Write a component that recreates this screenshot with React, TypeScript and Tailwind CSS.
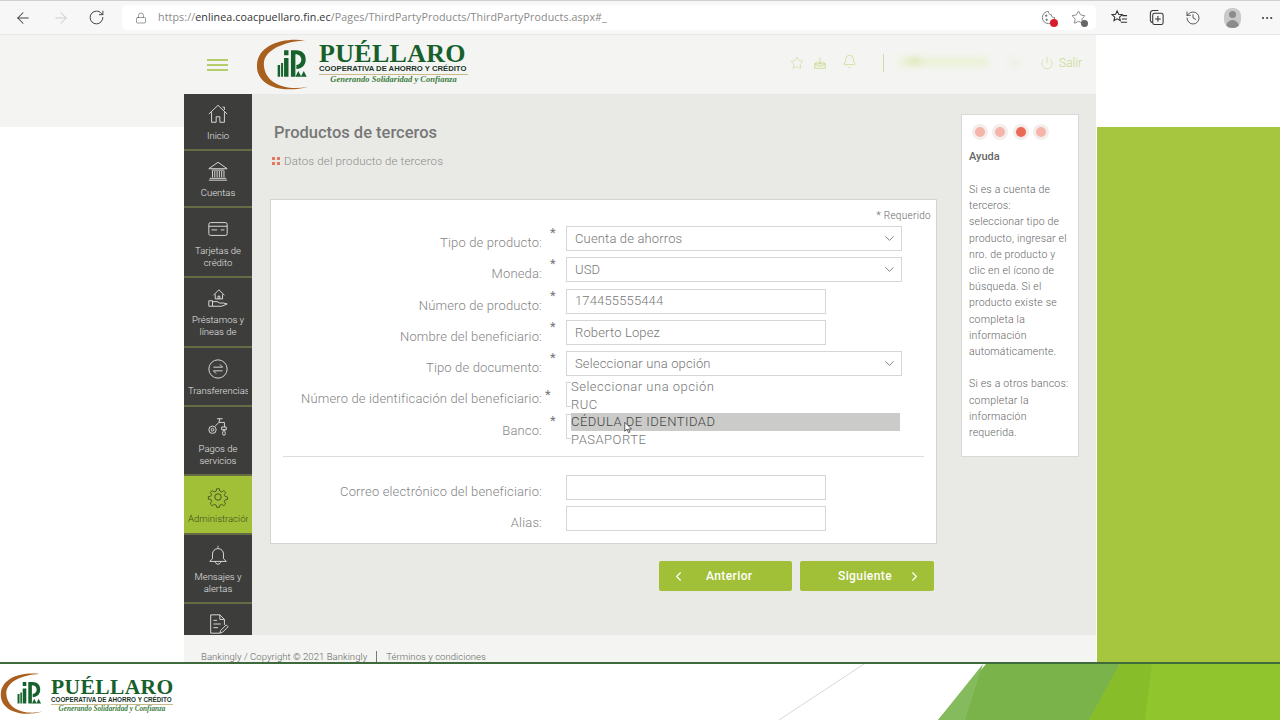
import { ArrowLeft, ArrowRight, ChevronDown, ChevronLeft, ChevronRight, History, Lock, MoreHorizontal, Power, RotateCw, Star, Bell } from "lucide-react";

function Logo({ small }: { small?: boolean }) {
  return (
    <div className={small ? "flex items-start w-[173px] h-[52px]" : "flex items-start w-[212px] h-[54px]"}>
      <svg viewBox="0 0 64 54" className={small ? "w-[51px] h-[52px] shrink-0" : "w-[63px] h-[54px] shrink-0"}>
        <path d="M50 2C26-1 2 7 1 27c-1 20 24 30 52 22-22 5-44-3-45-22C7 12 28 3 50 2Z" fill="#a9601f" />
        <path d="M28.500 12h4.500v5h-4.500zM28.500 20h4.500v19h-4.500zM25.500 25h2v14h-2zM22 27h2.500v12H22z" fill="#17622c" />
        <path d="M35.500 12h5c7 0 10 4 10 9.500S47 31 41 31v-4c3 0 5-2.500 5-5.500S44 16 40 16v23h-4.500Z" fill="#17622c" />
        <path d="M43 33l3 6h-6ZM48.500 33l3 6h-6Z" fill="#17622c" />
      </svg>
      <div className={small ? "flex flex-col w-[122px]" : "flex flex-col w-[149px]"}>
        <div className={small ? "text-[21.500px] leading-[17px] mt-[11px] font-bold text-[#17602c] tracking-[0.4px] whitespace-nowrap font-['Liberation_Serif',serif]" : "text-[26px] leading-[20px] mt-[6px] font-bold text-[#17602c] tracking-[0.3px] whitespace-nowrap font-['Liberation_Serif',serif]"}>
          PUÉLLARO
        </div>
        <div className={small ? "text-[6.300px] leading-[8px] font-bold text-[#20352a] whitespace-nowrap border-b border-[#c9b98a] font-['Liberation_Sans',sans-serif]" : "text-[7.700px] leading-[10px] font-bold text-[#20352a] whitespace-nowrap border-b border-[#c9b98a] font-['Liberation_Sans',sans-serif]"}>
          COOPERATIVA DE AHORRO Y CRÉDITO
        </div>
        <div className={small ? "text-[7.200px] leading-[9px] font-bold italic text-[#3e7d43] text-center whitespace-nowrap font-['Liberation_Serif',serif]" : "text-[8.500px] leading-[8px] font-bold italic text-[#3e7d43] text-center whitespace-nowrap font-['Liberation_Serif',serif]"}>
          Generando Solidaridad y Confianza
        </div>
      </div>
    </div>
  );
}

function BrowserBar() {
  return (
    <div className="h-[35px] shrink-0 flex items-center bg-[#f7f7f7] border-t border-t-[#cfcfcf] border-b border-b-[#e8e8e8] text-[#444] font-['Open_Sans',sans-serif]">
      <div className="w-[122px] shrink-0 flex items-center pl-[14px]">
        <ArrowLeft size={18} strokeWidth={1.4} />
        <ArrowRight size={18} strokeWidth={1.4} className="ml-[20px] text-[#cfcfcf]" />
        <RotateCw size={17} strokeWidth={1.4} className="ml-[18px]" />
      </div>
      <div className="w-[974px] h-[25px] shrink-0 bg-white rounded-[5px] flex items-center pl-[13px]">
        <Lock size={12} strokeWidth={1.3} className="text-[#666]" />
        <div className="ml-[11px] text-[10.700px] tracking-[0.1px] text-[#8a8a8a] whitespace-nowrap">
          https://<span className="text-[#333]">enlinea.coacpuellaro.fin.ec</span>/Pages/ThirdPartyProducts/ThirdPartyProducts.aspx#_
        </div>
        <div className="ml-auto flex items-center pr-[9px] gap-[15px]">
          <div className="relative w-[15px] h-[15px]">
            <svg viewBox="0 0 16 16" className="w-[15px] h-[15px]" fill="none" stroke="#777" strokeWidth="1">
              <path d="M8 1.500A6.500 6.500 0 1 0 14.500 8 3 3 0 0 1 11 5 3 3 0 0 1 8 1.500Z" />
              <circle cx="5.500" cy="6" r=".8" fill="#777" />
              <circle cx="6" cy="10.500" r=".8" fill="#777" />
            </svg>
            <span className="absolute right-[-2px] bottom-[-2px] w-[8px] h-[8px] rounded-full bg-[#d81e2c]" />
          </div>
          <div className="relative w-[16px] h-[16px]">
            <Star size={15} strokeWidth={1.1} className="text-[#555]" />
            <span className="absolute right-[-1px] bottom-[-1px] w-[7px] h-[7px] rounded-full bg-[#666]" />
          </div>
        </div>
      </div>
      <div className="flex items-center pl-[15px] text-[#333]">
        <svg viewBox="0 0 18 18" className="w-[17px] h-[17px]" fill="none" stroke="currentColor" strokeWidth="1.100">
          <path d="M6.500 2l1.600 3.600 3.900.4-3 2.600.9 3.900L6.500 10.500 3.100 12.500 4 8.600 1 6l3.900-.4ZM12 7h5M11.500 10.500h5.500M10.500 14h6.500" />
        </svg>
        <svg viewBox="0 0 18 18" className="ml-[20px] w-[17px] h-[17px]" fill="none" stroke="currentColor" strokeWidth="1.100">
          <rect x="5" y="4.500" width="11" height="12" rx="2" />
          <path d="M5 14.500A3 3 0 0 1 2.500 12V4A3 3 0 0 1 5.500 1.500H11M10.500 7.500v6M7.500 10.500h6" />
        </svg>
        <History size={16} strokeWidth={1.2} className="ml-[20px]" />
        <div className="ml-[23px] w-[17px] h-[20px] rounded-[8px] bg-[#c9c9c9] relative overflow-hidden">
          <span className="absolute left-[5px] top-[3px] w-[7px] h-[7px] rounded-full bg-[#8c8c8c]" />
          <span className="absolute left-[2px] top-[12px] w-[13px] h-[8px] rounded-t-full bg-[#8c8c8c]" />
        </div>
        <MoreHorizontal size={14} strokeWidth={1.6} className="ml-[19px]" />
      </div>
    </div>
  );
}

function TopHeader() {
  return (
    <div className="h-[59px] shrink-0 flex items-center bg-[#f4f5f2] pl-[23px] pr-[14px]">
      <div className="w-[21px] flex flex-col gap-[3px]">
        <span className="h-[2px] bg-[#b4cc6a]" />
        <span className="h-[2px] bg-[#b4cc6a]" />
        <span className="h-[2px] bg-[#b4cc6a]" />
      </div>
      <div className="ml-[28px] mt-[1px]">
        <Logo />
      </div>
      <div className="ml-auto flex items-center mb-[3px] text-[#c6d88f]">
        <Star size={14} strokeWidth={1.1} />
        <svg viewBox="0 0 16 16" className="ml-[9px] w-[14px] h-[14px]" fill="none" stroke="currentColor" strokeWidth="1">
          <path d="M2 9l3-3M14 9l-3-3M2 9v5h12V9H2l4 2.500h4L14 9M8 2v7M6 7l2 2 2-2" />
        </svg>
        <Bell size={15} strokeWidth={1.1} className="ml-[15px] mb-[3px]" />
        <span className="ml-[26px] w-[1px] h-[18px] bg-[#cfdc9f]" />
        <div className="ml-[11px] w-[135px] h-[14px] relative blur-[3px]">
          <span className="absolute left-[4px] top-[2px] w-[90px] h-[8px] bg-[#eaf0d3]" />
          <span className="absolute left-[14px] top-[1px] w-[12px] h-[8px] bg-[#dfe8bd]" />
          <span className="absolute left-[115px] top-[2px] w-[10px] h-[9px] bg-[#eef0e4]" />
        </div>
        <Power size={14} strokeWidth={1.1} className="ml-[10px]" />
        <span className="ml-[5px] text-[12px] font-light font-['Roboto',sans-serif]">Salir</span>
      </div>
    </div>
  );
}

const stroke = { fill: "none", stroke: "currentColor", strokeWidth: 1 };

const navItems = [
  {
    lines: ["Inicio"],
    h: "h-[57px] pt-[9px]",
    icon: (
      <svg viewBox="0 0 24 24" className="w-[22px] h-[22px]" {...stroke}>
        <path d="M2 12L12 2.500 22 12M5 10v11h5v-6h4v6h5V10M17 4.500h2v3" />
      </svg>
    ),
  },
  {
    lines: ["Cuentas"],
    h: "h-[57px] pt-[9px]",
    icon: (
      <svg viewBox="0 0 24 24" className="w-[22px] h-[22px]" {...stroke}>
        <path d="M2 9.500L12 2.500l10 7ZM5 11h14M6 12v7M8.500 12v7M11 12v7M13.500 12v7M16 12v7M18.500 12v7M3 20h18M2 22h20" />
      </svg>
    ),
  },
  {
    lines: ["Tarjetas de", "crédito"],
    h: "h-[70px] pt-[10px]",
    icon: (
      <svg viewBox="0 0 24 24" className="w-[22px] h-[22px]" {...stroke}>
        <rect x="2" y="5" width="20" height="14" rx="2" />
        <path d="M2 9h20M5 13h6M15 13h4" />
      </svg>
    ),
  },
  {
    lines: ["Préstamos y", "líneas de"],
    h: "h-[70px] pt-[9px]",
    icon: (
      <svg viewBox="0 0 24 24" className="w-[22px] h-[22px]" {...stroke}>
        <path d="M7 9l6-6 6 6M9 8v5h8V8M12 13v-3h2v3M2 15h4v6H2ZM6 16h5l3 1.500h4l4 1-6 2.500H6" />
      </svg>
    ),
  },
  {
    lines: ["Transferencias"],
    h: "h-[59px] pt-[10px]",
    icon: (
      <svg viewBox="0 0 24 24" className="w-[22px] h-[22px]" {...stroke}>
        <circle cx="12" cy="12" r="10" />
        <path d="M7 10h10l-3-3M17 14H7l3 3" />
      </svg>
    ),
  },
  {
    lines: ["Pagos de", "servicios"],
    h: "h-[69px] pt-[9px]",
    icon: (
      <svg viewBox="0 0 24 24" className="w-[22px] h-[22px]" {...stroke}>
        <circle cx="6" cy="15" r="4" />
        <circle cx="6" cy="15" r="1.500" />
        <path d="M9 11l4-4h6v5M13 7l1-4M11 3h6M16 12h5v3h-5ZM18.500 15c-2 3-2 6 0 6s2-3 0-6Z" />
      </svg>
    ),
  },
  {
    lines: ["Administración"],
    h: "h-[59px] pt-[10px]",
    active: true,
    icon: (
      <svg viewBox="0 0 24 24" className="w-[22px] h-[22px]" {...stroke}>
        <circle cx="12" cy="12" r="3.500" />
        <path d="M10.300 2h3.400l.5 3 2.300 1 2.500-1.800 2.400 2.400L19.600 9l1 2.300 3 .7v3l-3 .5-1 2.300 1.800 2.500-2.400 2.400-2.500-1.800-2.300 1-.5 2.600h-3.400l-.5-2.600-2.300-1-2.500 1.800-2.400-2.400L4.300 17.300l-1-2.300-3-.5v-3l3-.5 1-2.300L2.500 6.600l2.400-2.400L7.400 6l2.300-1Z" transform="translate(1.200 1.200) scale(.9)" />
      </svg>
    ),
  },
  {
    lines: ["Mensajes y", "alertas"],
    h: "h-[69px] pt-[9px]",
    icon: (
      <svg viewBox="0 0 24 24" className="w-[22px] h-[22px]" {...stroke}>
        <path d="M12 2v2M6 16V11a6 6 0 0 1 12 0v5l3 3H3ZM9 19c0 4 6 4 6 0" />
      </svg>
    ),
  },
  {
    lines: [],
    h: "h-[40px] pt-[9px]",
    icon: (
      <svg viewBox="0 0 24 24" className="w-[22px] h-[22px]" {...stroke}>
        <path d="M14 22H4V2h10l5 5v6M14 2v5h5M7 8h4M7 12h8M7 16h5M14 22l1-3 6-6 2 2-6 6Z" />
      </svg>
    ),
  },
];

function Sidebar() {
  return (
    <div className="w-[68px] shrink-0 overflow-hidden bg-[#3d3d3b] font-['Roboto',sans-serif] font-light">
      {navItems.map((item, i) => (
        <div
          key={i}
          className={`${item.h} flex flex-col items-center border-b-2 border-[#666a45] text-[9.500px] leading-[12px] ${
            item.active ? "bg-[#a2c037] text-[#3d4a22] border-b-0" : "text-[#e4e4e4]"
          }`}
        >
          {item.icon}
          <div className="mt-[5px] w-[60px] overflow-hidden text-center">
            {item.lines.map((l) => (
              <div key={l} className="whitespace-nowrap">
                {l}
              </div>
            ))}
          </div>
        </div>
      ))}
    </div>
  );
}

const inputClass = "h-[25px] border border-[#d6d6d6] bg-white flex items-center pl-[8px] text-[13px] font-light tracking-[0.15px] text-[#777]";

function SelectBox({ value }: { value: string }) {
  return (
    <div className={`${inputClass} w-[336px] justify-between pr-[4px]`}>
      <span>{value}</span>
      <ChevronDown size={15} strokeWidth={1.3} className="text-[#666]" />
    </div>
  );
}

function TextBox({ value }: { value?: string }) {
  return <div className={`${inputClass} w-[260px]`}>{value}</div>;
}

function Row({
  label,
  children,
  required,
  tight,
}: {
  label: string;
  children: React.ReactNode;
  required?: boolean;
  tight?: boolean;
}) {
  return (
    <div className="h-[31.300px] flex items-start">
      <div className="w-[271px] shrink-0 pt-[7px] text-right text-[13px] leading-[20px] font-light tracking-[0.15px] text-[#858585] whitespace-nowrap">
        {label}
      </div>
      <div className={tight ? "w-[24px] shrink-0 pl-[3px] pt-[6px] text-[13px] leading-[14px] text-[#777]" : "w-[24px] shrink-0 pl-[8px] text-[13px] leading-[14px] text-[#777]"}>
        {required ? "*" : ""}
      </div>
      {children}
    </div>
  );
}

function FormCard() {
  return (
    <div className="w-[667px] h-[345px] border border-[#d4d4d2] bg-white font-['Roboto',sans-serif]">
      <div className="h-[26px] pt-[10px] pr-[5px] text-right text-[10px] leading-[12px] font-light tracking-[0.3px] text-[#666]">* Requerido</div>
      <Row label="Tipo de producto:" required>
        <SelectBox value="Cuenta de ahorros" />
      </Row>
      <Row label="Moneda:" required>
        <SelectBox value="USD" />
      </Row>
      <Row label="Número de producto:" required>
        <TextBox value="174455555444" />
      </Row>
      <Row label="Nombre del beneficiario:" required>
        <TextBox value="Roberto Lopez" />
      </Row>
      <Row label="Tipo de documento:" required>
        <div className="relative">
          <SelectBox value="Seleccionar una opción" />
          <div className="absolute z-10 left-[5px] top-[27px] w-[329px] bg-white text-[13px] leading-[17.500px] font-light tracking-[0.5px] text-[#777]">
            <div>Seleccionar una opción</div>
            <div>RUC</div>
            <div className="bg-[#cbcbc9] text-[#444]">CÉDULA DE IDENTIDAD</div>
            <div>PASAPORTE</div>
            <svg viewBox="0 0 12 16" className="absolute left-[53px] top-[43px] w-[9px] h-[13px]">
              <path d="M1 1v12l3-3 2 5 2-1-2-4h4Z" fill="#fff" stroke="#333" strokeWidth="1" />
            </svg>
          </div>
        </div>
      </Row>
      <Row label="Número de identificación del beneficiario:" required tight>
        <TextBox />
      </Row>
      <Row label="Banco:" required>
        <TextBox />
      </Row>
      <div className="mx-[12px] mb-[18px] mt-[11px] border-t border-[#dcdcda]" />
      <Row label="Correo electrónico del beneficiario:">
        <TextBox />
      </Row>
      <Row label="Alias:">
        <TextBox />
      </Row>
    </div>
  );
}

function HelpCard() {
  const dots = ["bg-[#f5b5ab]", "bg-[#f5b5ab]", "bg-[#ec6a55]", "bg-[#f5b5ab]"];
  const text = [
    "Si es a cuenta de",
    "terceros:",
    "seleccionar tipo de",
    "producto, ingresar el",
    "nro. de producto y",
    "clic en el ícono de",
    "búsqueda. Si el",
    "producto existe se",
    "completa la",
    "información",
    "automáticamente.",
    "\u00a0",
    "Si es a otros bancos:",
    "completar la",
    "información",
    "requerida.",
  ];
  return (
    <div className="w-[118px] h-[343px] mt-[20px] border border-[#d9d9d7] bg-white pl-[7px] pt-[9px] font-['Roboto',sans-serif]">
      <div className="flex gap-[4.300px] pl-[3px]">
        {dots.map((d, i) => (
          <span key={i} className="w-[16px] h-[16px] rounded-full bg-[#f3eeec] flex items-center justify-center">
            <span className={`w-[10px] h-[10px] rounded-full ${d}`} />
          </span>
        ))}
      </div>
      <div className="mt-[10px] text-[11px] leading-[14px] font-medium text-[#666]">Ayuda</div>
      <div className="mt-[18px] text-[10.500px] leading-[16.200px] font-light tracking-[0.2px] text-[#666] whitespace-nowrap">
        {text.map((t, i) => (
          <div key={i}>{t}</div>
        ))}
      </div>
    </div>
  );
}

function MainContent() {
  return (
    <div className="flex-1 bg-[#e9eae6] pl-[18px] flex gap-[24px] font-['Roboto',sans-serif]">
      <div className="w-[667px]">
        <div className="pl-[4px] pt-[29px] text-[16.500px] leading-[20px] font-medium text-[#777]">Productos de terceros</div>
        <div className="mt-[9px] flex items-center pl-[2px] text-[11.500px] leading-[18px] font-light tracking-[0.15px] text-[#8b8b8b]">
          <span className="grid grid-cols-2 gap-[2px] mr-[4px]">
            <span className="w-[3px] h-[3px] bg-[#e8765a]" />
            <span className="w-[3px] h-[3px] bg-[#e8765a]" />
            <span className="w-[3px] h-[3px] bg-[#e8765a]" />
            <span className="w-[3px] h-[3px] bg-[#e8765a]" />
          </span>
          Datos del producto de terceros
        </div>
        <div className="mt-[29px]">
          <FormCard />
        </div>
        <div className="mt-[17px] pr-[3px] flex justify-end gap-[8px] text-[12px] font-medium tracking-[0.4px] text-white">
          <div className="w-[133px] h-[30px] rounded-[2px] bg-[#a2c037] flex items-center pl-[12px]">
            <ChevronLeft size={15} strokeWidth={1.8} />
            <span className="ml-[20px]">Anterior</span>
          </div>
          <div className="w-[134px] h-[30px] rounded-[2px] bg-[#a2c037] flex items-center pl-[38px]">
            <span>Siguiente</span>
            <ChevronRight size={15} strokeWidth={1.8} className="ml-[15px]" />
          </div>
        </div>
      </div>
      <HelpCard />
    </div>
  );
}

export default function App() {
  return (
    <div className="h-screen w-[1280px] overflow-hidden flex flex-col bg-white">
      <BrowserBar />
      <div className="h-[627px] shrink-0 flex">
        <div className="w-[184px] shrink-0 flex flex-col">
          <div className="h-[92px] bg-[#f4f5f2]" />
        </div>
        <div className="w-[912px] shrink-0 flex flex-col">
          <TopHeader />
          <div className="h-[541px] shrink-0 flex">
            <Sidebar />
            <MainContent />
          </div>
          <div className="flex-1 bg-[#f4f5f2] pl-[17px] pt-[16px] text-[9.500px] leading-[12px] font-light tracking-[0.05px] text-[#666] font-['Roboto',sans-serif] whitespace-nowrap">
            Bankingly / Copyright © 2021 Bankingly
            <span className="mx-[9px] border-l border-[#777]" />
            Términos y condiciones
          </div>
        </div>
        <div className="flex-1 flex flex-col">
          <div className="h-[92px]" />
          <div className="flex-1 ml-[1px] bg-[#a5c63e]" />
        </div>
      </div>
      <div className="relative flex-1 border-t-2 border-[#3f6b3c] bg-white">
        <svg viewBox="0 0 1280 56" className="absolute inset-0 w-[1280px] h-[56px]">
          <path d="M864 0L779 56" stroke="#d8d8d8" strokeWidth="1" fill="none" />
          <path d="M986 0L938 56H1100L1120 0Z" fill="#79b34a" />
          <path d="M983 0L938 56H965L975 25Z" fill="#85ba5d" />
          <path d="M1120 0L1089 56H1280V0Z" fill="#90c52d" />
          <path d="M1120 0L1089 56H1145L1152 0Z" fill="#88bd2a" />
        </svg>
        <div className="relative pt-[4px]">
          <Logo small />
        </div>
      </div>
    </div>
  );
}
